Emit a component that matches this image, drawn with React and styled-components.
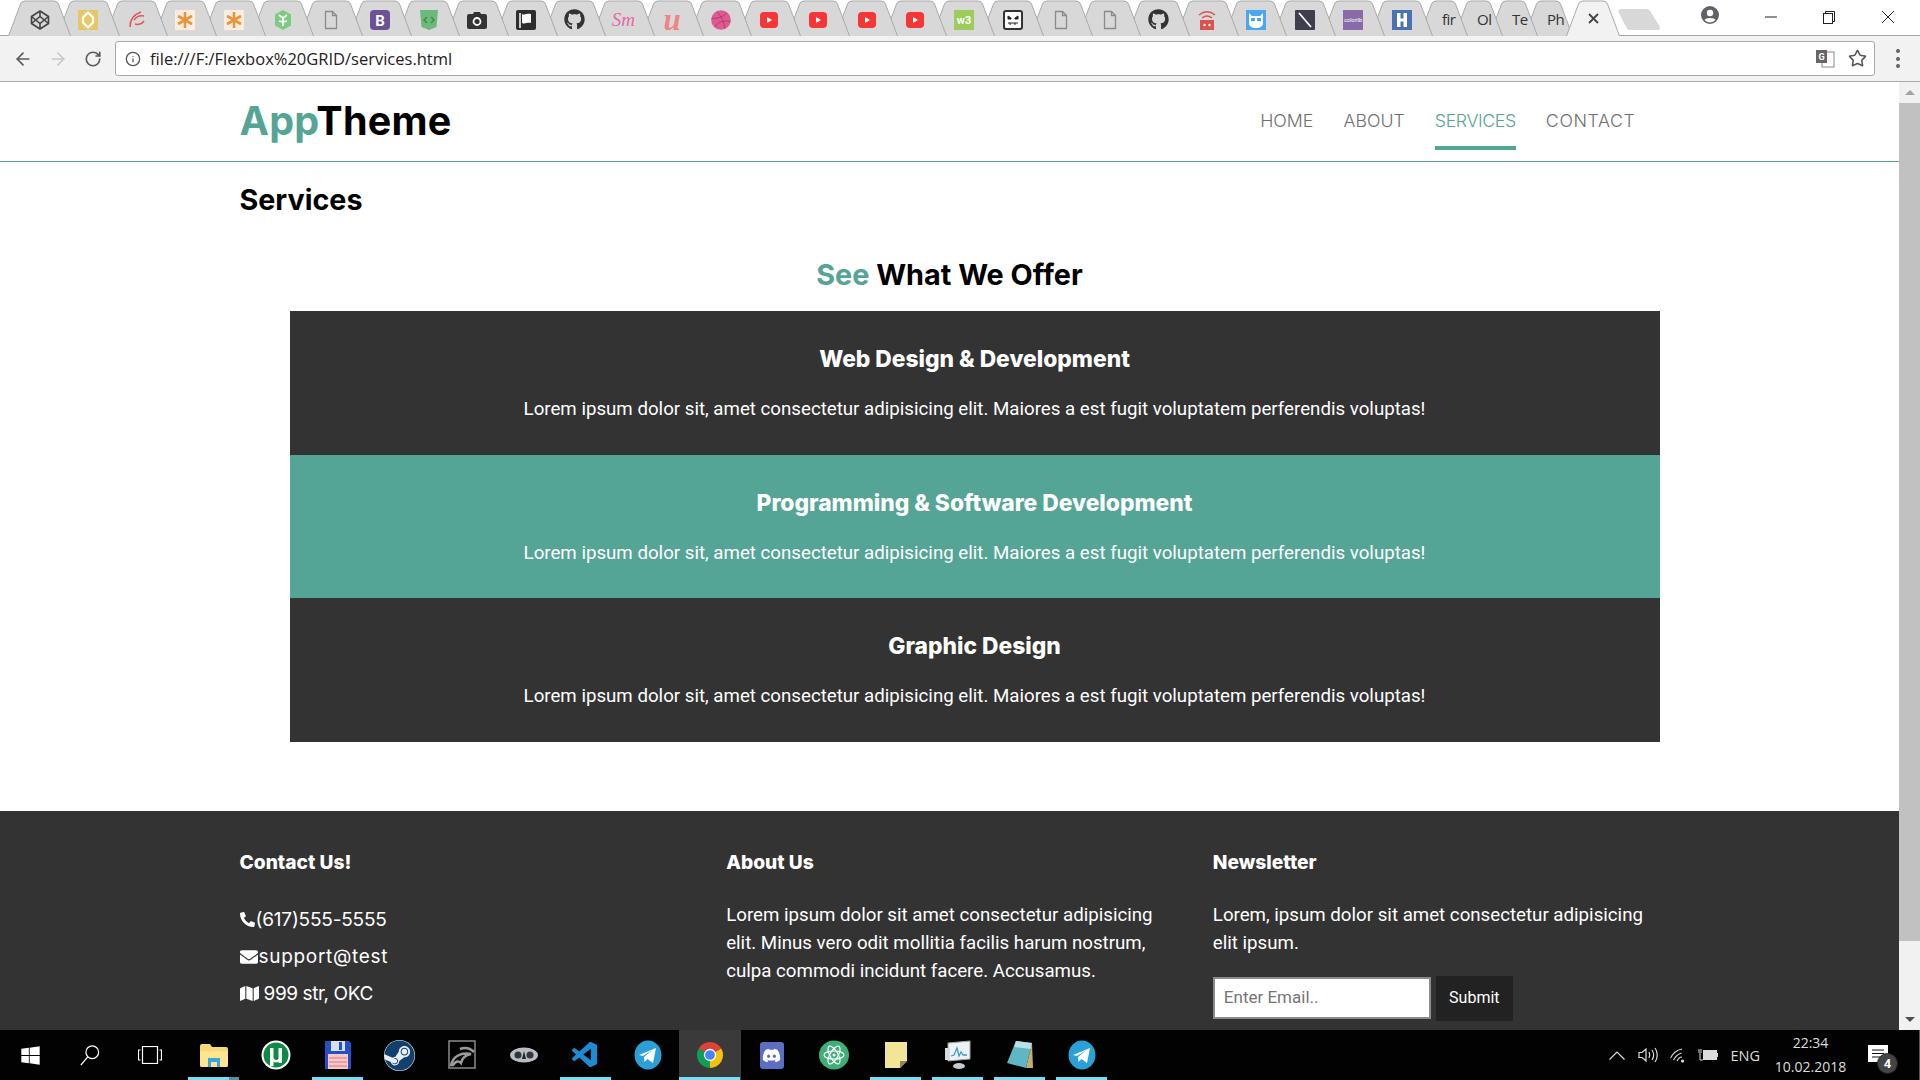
import React from 'react'
import styled, { createGlobalStyle } from 'styled-components'
import { ArrowLeft, ArrowRight, RotateCw, Info, Star } from 'lucide-react'
import { FaGithub, FaPhoneAlt, FaEnvelope, FaMap, FaWindows, FaSteam, FaDiscord } from 'react-icons/fa'
import { VscVscode } from 'react-icons/vsc'

const TEAL = '#55a596'

const Script = styled.span`
  font-family: "Liberation Serif", serif;
  font-style: italic;
  font-weight: ${({ $weight }) => $weight};
  font-size: ${({ $size }) => $size}px;
  line-height: 20px;
  color: ${({ $color }) => $color};
  white-space: nowrap;
`

const SteamWrap = styled.div`
  width: 31px;
  height: 31px;
  border-radius: 50%;
  background: #e8eef3;
`

const DiscordBox = styled.div`
  width: 24px;
  height: 27px;
  display: flex;
  align-items: center;
  justify-content: center;
  background: #5b6ec2;
  border-radius: 3px;
`

const Doc = () => (
  <svg width="20" height="20" viewBox="0 0 20 20" fill="none" stroke="#8a8a8a" strokeWidth="1.3">
    <path d="M4.5 1.5h7l4 4v13h-11z" /><path d="M11.5 1.5v4h4" />
  </svg>
)

const Tube = () => (
  <svg width="20" height="20" viewBox="0 0 20 20">
    <rect x="1" y="2" width="18" height="16" rx="4" fill="#f83535" />
    <path d="M8 7l5 3-5 3z" fill="#fff" />
  </svg>
)

const Star8 = () => (
  <svg width="20" height="20" viewBox="0 0 20 20">
    <rect width="20" height="20" fill="#fbeee0" />
    <g stroke="#e8963c" strokeWidth="2.6">
      <path d="M10 2v16M3 6l14 8M17 6L3 14" />
    </g>
  </svg>
)

const favicons = [
  <svg width="20" height="20" viewBox="0 0 20 20" fill="none" stroke="#444" strokeWidth="1.6"><path d="M10 1l8.5 5.5v7L10 19l-8.5-5.5v-7z" /><path d="M10 1v5.5M10 13.5V19M1.5 6.500L10 13.500l8.500-7M1.500 13.500L10 6.500l8.500 7" /></svg>,
  <svg width="20" height="20" viewBox="0 0 20 20"><rect width="20" height="24" y="-2" rx="1" fill="#e8c765" /><path d="M10 2.500l5 5v5l-5 5-5-5v-5z" fill="none" stroke="#fff" strokeWidth="2.200" /></svg>,
  <svg width="20" height="20" viewBox="0 0 20 20" fill="none" stroke="#dc5a5a" strokeWidth="1.500"><path d="M3 17C3 9 8 4 14 2" /><path d="M7 10c2-3 6-5 10-4" /><path d="M8 14c3 1 7 0 9-3" /></svg>,
  <Star8 />,
  <Star8 />,
  <svg width="20" height="20" viewBox="0 0 20 20"><path d="M10 0l8 4.500v11L10 20l-8-4.500v-11z" fill="#7ccb80" /><path d="M10 16V8M10 8L6 5M10 8l4-3M10 12l4-1M10 12l-4-1" stroke="#fff" strokeWidth="1.700" /></svg>,
  <Doc />,
  <svg width="20" height="20" viewBox="0 0 20 20"><rect width="20" height="20" rx="4" fill="#6a5295" /><text x="10" y="15.500" textAnchor="middle" fontFamily="Roboto, sans-serif" fontWeight="700" fontSize="15" fill="#fff">B</text></svg>,
  <svg width="20" height="20" viewBox="0 0 20 20"><path d="M1 0h18l-1.500 17L10 20l-7.500-3z" fill="#6cb97c" /><path d="M8 7l-3 3 3 3M12 7l3 3-3 3" fill="none" stroke="#3e8750" strokeWidth="1.400" /></svg>,
  <svg width="20" height="20" viewBox="0 0 20 20"><path d="M2 4h4l1-2h6l1 2h4a2 2 0 0 1 2 2v11a2 2 0 0 1-2 2H2a2 2 0 0 1-2-2V6a2 2 0 0 1 2-2z" fill="#333" /><circle cx="10" cy="11.500" r="3.500" fill="none" stroke="#fff" strokeWidth="1.800" /></svg>,
  <svg width="20" height="20" viewBox="0 0 20 20"><rect width="20" height="20" rx="2" fill="#2d2d2d" /><path d="M4 3v15" stroke="#fff" strokeWidth="1.500" /><path d="M6 4c3 1.500 5-1 9 0v9c-4-1-6 1.500-9 0z" fill="#fff" /></svg>,
  <FaGithub size={21} color="#333" />,
  <Script $size={19} $weight={400} $color="#e868a8">Sm</Script>,
  <Script $size={31} $weight={700} $color="#f08484">u</Script>,
  <svg width="20" height="20" viewBox="0 0 20 20"><circle cx="10" cy="10" r="9.800" fill="#e05a92" /><g fill="none" stroke="#b83a72" strokeWidth="1"><path d="M6 1.500c4 4 7 11 8 17" /><path d="M.5 8.500c6 0 12-1.500 15.500-5.500" /><path d="M4 17c2-5 8-7 15.500-5.500" /></g></svg>,
  <Tube />,
  <Tube />,
  <Tube />,
  <Tube />,
  <svg width="20" height="20" viewBox="0 0 20 20"><rect width="20" height="20" rx="1" fill="#9ccc5c" /><text x="10" y="14" textAnchor="middle" fontFamily="Roboto, sans-serif" fontWeight="700" fontSize="11" fill="#fff">w3</text></svg>,
  <svg width="20" height="20" viewBox="0 0 20 20"><rect x="1" y="1" width="18" height="18" rx="2" fill="#fff" stroke="#333" strokeWidth="2" /><path d="M5 6l3 2v1H5zM15 6l-3 2v1h3zM5 13h10M7 13v2M12 13v2" fill="#222" stroke="#222" /></svg>,
  <Doc />,
  <Doc />,
  <FaGithub size={21} color="#333" />,
  <svg width="20" height="20" viewBox="0 0 20 20"><path d="M2 5c5-4 11-4 16 0M5 8c3-2.500 7-2.500 10 0" fill="none" stroke="#d9534f" strokeWidth="1.400" /><rect x="3" y="10" width="14" height="10" fill="#d9534f" /><circle cx="7.500" cy="15" r="1.200" fill="#fff" /><circle cx="12.500" cy="15" r="1.200" fill="#fff" /></svg>,
  <svg width="20" height="20" viewBox="0 0 20 20"><rect width="20" height="20" fill="#4aa8f0" /><path d="M3 3l3 3h8l3-3v10a5 5 0 0 1-5 5H8a5 5 0 0 1-5-5z" fill="#fff" /><path d="M5 8h4v3H5zM11 8h4v3h-4z" fill="#4aa8f0" /></svg>,
  <svg width="20" height="20" viewBox="0 0 20 20"><rect width="20" height="20" rx="1" fill="#3f3e50" /><path d="M4 3l12 14" stroke="#fff" strokeWidth="1.800" /></svg>,
  <svg width="20" height="20" viewBox="0 0 20 20"><rect width="20" height="20" fill="#8a6ba8" /><text x="10" y="12" textAnchor="middle" fontFamily="Roboto, sans-serif" fontSize="5.500" fill="#fff">colorlib</text></svg>,
  <svg width="20" height="20" viewBox="0 0 20 20"><rect width="20" height="20" fill="#4a73b4" /><path d="M5 3h3.500v5.500h3V3H15v14h-3.500v-5.500h-3V17H5z" fill="#fff" /></svg>,
]

const textTabs = ['fir', 'Ol', 'Te', 'Ph']

const Telegram = () => (
  <svg width="28" height="30" viewBox="0 0 28 30">
    <ellipse cx="14" cy="15" rx="13.500" ry="14.500" fill="#2b9fd8" />
    <path d="M5 15L22 8l-3 15-5.500-4-3 3-.5-5 8.500-7-9.500 6z" fill="#fff" />
  </svg>
)

const taskItems = [
  { icon: <svg width="28" height="24" viewBox="0 0 28 24"><path d="M0 3a2 2 0 0 1 2-2h8l2 3h14a2 2 0 0 1 2 2v16a2 2 0 0 1-2 2H2a2 2 0 0 1-2-2z" fill="#f6d876" /><path d="M0 8h28v14a2 2 0 0 1-2 2H2a2 2 0 0 1-2-2z" fill="#fde48f" /><path d="M8 24V15h12v9h-3v-5h-6v5z" fill="#3aa4e0" /></svg>, state: 'split' },
  { icon: <svg width="30" height="30" viewBox="0 0 30 30"><circle cx="15" cy="15" r="14.500" fill="#fff" /><circle cx="15" cy="15" r="12.500" fill="#0f8a45" /><path d="M9 8h3.500v10a3 3 0 0 0 5 1V8H21v15h-3.500v-1.500c-1.500 1.200-3.500 1.200-5 .5V26H9z" fill="#fff" /></svg> },
  { icon: <svg width="28" height="30" viewBox="0 0 28 30"><path d="M1 1h24l2 2v26H1z" fill="#2150c8" /><rect x="7" y="1" width="14" height="10" fill="#d9dfe8" /><rect x="15" y="2" width="3" height="8" fill="#2150c8" /><rect x="4" y="14" width="20" height="15" fill="#f9c7c7" /><path d="M5 18h18M5 22h18M5 26h18" stroke="#d67a7a" /></svg>, state: 'open' },
  { icon: <SteamWrap><FaSteam size={31} color="#12406e" /></SteamWrap> },
  { icon: <svg width="28" height="30" viewBox="0 0 28 30" fill="none"><rect x="1" y="1" width="26" height="27" stroke="#8b8b8b" strokeWidth="1.500" /><path d="M3 25c2-8 9-13 20-11-5 1-9 4-10 9-3-3-6-1-8 2zM12 9c5-2 10-1 14 3" stroke="#9a9a9a" strokeWidth="2.500" /></svg> },
  { icon: <svg width="28" height="16" viewBox="0 0 28 16"><ellipse cx="14" cy="8" rx="14" ry="7.500" fill="#b9bec4" /><circle cx="8" cy="8" r="3.500" fill="#34383c" /><circle cx="20" cy="8" r="3.500" fill="#34383c" /><path d="M14 4l2 8h-4z" fill="#22262a" /></svg> },
  { icon: <VscVscode size={31} color="#1f8ad2" />, state: 'open' },
  { icon: <Telegram /> },
  { icon: <svg width="28" height="30" viewBox="0 0 30 30"><path d="M15 15L2.900 8A14 14 0 0 1 27.100 8z" fill="#db4437" /><path d="M15 15L27.100 8A14 14 0 0 1 15 29z" fill="#f4c20d" /><path d="M15 15V29A14 14 0 0 1 2.900 8z" fill="#0f9d58" /><circle cx="15" cy="15" r="6.600" fill="#fff" /><circle cx="15" cy="15" r="5.200" fill="#4285f4" /></svg>, state: 'active' },
  { icon: <DiscordBox><FaDiscord size={19} color="#fff" /></DiscordBox> },
  { icon: <svg width="30" height="30" viewBox="0 0 30 30"><ellipse cx="15" cy="15" rx="15" ry="14.500" fill="#3fae78" /><g fill="none" stroke="#fff" strokeWidth="1.200"><ellipse cx="15" cy="15" rx="10" ry="4" /><ellipse cx="15" cy="15" rx="10" ry="4" transform="rotate(60 15 15)" /><ellipse cx="15" cy="15" rx="10" ry="4" transform="rotate(120 15 15)" /></g><circle cx="15" cy="15" r="1.500" fill="#fff" /></svg> },
  { icon: <svg width="24" height="28" viewBox="0 0 24 28"><path d="M1 1h22v19l-7 7H1z" fill="#f3e598" /><path d="M23 20l-7 7v-7z" fill="#8b8560" /></svg>, state: 'open' },
  { icon: <svg width="28" height="30" viewBox="0 0 28 30"><path d="M4 3l22-2v18L4 21z" fill="#eef2f5" stroke="#9aa4ac" /><path d="M7 16l3-1 3-7 2 8 2-4 2 3 4 0" fill="none" stroke="#3d9ad1" strokeWidth="1.300" /><ellipse cx="15" cy="26" rx="6" ry="3" fill="#c5c9cd" /><rect x="1" y="8" width="5" height="12" fill="#d6dade" /></svg>, state: 'open' },
  { icon: <svg width="28" height="30" viewBox="0 0 28 30"><path d="M10 1l16 2-6 25L1 23z" fill="#5fb7c6" /><path d="M10 1l16 2-1 6-17-2z" fill="#b9e0e6" /><path d="M26 3l1 25h-7z" fill="#c9ad6c" /></svg>, state: 'open' },
  { icon: <Telegram />, state: 'open' },
]

const services = [
  { title: 'Web Design & Development' },
  { title: 'Programming & Software Development', accent: true },
  { title: 'Graphic Design' },
]

const LOREM = 'Lorem ipsum dolor sit, amet consectetur adipisicing elit. Maiores a est fugit voluptatem perferendis voluptas!'

export default function App() {
  return (
    <Screen>
      <GlobalStyle />
      <Browser>
        <TabStrip>
          {favicons.map((icon, i) => (
            <Tab key={i} style={{ zIndex: 60 - i }}>
              <TabShape width="63" height="36" viewBox="0 0 63 36">
                <path d="M0.5 36L12.500 4Q13.700 1 17 1H46Q49.300 1 50.500 4L62.500 36" fill="#d8d8d8" stroke="#a9a9a9" />
              </TabShape>
              <TabIcon>{icon}</TabIcon>
            </Tab>
          ))}
          {textTabs.map((label, i) => (
            <TextTab key={label} style={{ zIndex: 30 - i }}>
              <TabShape width="49" height="36" viewBox="0 0 49 36">
                <path d="M0.500 36L12.500 4Q13.700 1 17 1H32Q35.300 1 36.500 4L48.500 36" fill="#d8d8d8" stroke="#a9a9a9" />
              </TabShape>
              <TextTabLabel>{label}</TextTabLabel>
            </TextTab>
          ))}
          <ActiveTab>
            <TabShape width="54" height="36" viewBox="0 0 54 36">
              <path d="M0.500 36L12.500 4Q13.700 1 17 1H37Q40.300 1 41.500 4L53.500 36" fill="#f2f2f2" stroke="#a9a9a9" />
            </TabShape>
            <TabClose>
              <svg width="11" height="11" viewBox="0 0 11 11" stroke="#444" strokeWidth="1.800"><path d="M1 1l9 9M10 1l-9 9" /></svg>
            </TabClose>
          </ActiveTab>
          <NewTab width="42" height="21" viewBox="0 0 42 21">
            <path d="M3 0H29Q31 0 32 2L41.500 17Q43 21 39 21H12Q9.500 21 8.500 19L.5 3Q0 0 3 0z" fill="#d8d8d8" />
          </NewTab>
          <WindowControls>
            <Avatar>
              <svg width="18" height="18" viewBox="0 0 18 18"><circle cx="9" cy="9" r="9" fill="#5f6368" /><circle cx="9" cy="7" r="3.200" fill="#fff" /><path d="M3.500 14c1-2.800 10-2.800 11 0a7.500 7.500 0 0 1-11 0z" fill="#fff" /></svg>
            </Avatar>
            <WindowBtn>
              <svg width="12" height="2" viewBox="0 0 12 2"><path d="M0 1h12" stroke="#222" /></svg>
            </WindowBtn>
            <WindowBtn>
              <svg width="12" height="13" viewBox="0 0 12 13" fill="none" stroke="#222"><rect x=".5" y="2.500" width="9" height="10" /><path d="M2.500 2.500V.5h9v10H9.500" /></svg>
            </WindowBtn>
            <WindowBtn>
              <svg width="12" height="12" viewBox="0 0 12 12" stroke="#222"><path d="M0 0l12 12M12 0L0 12" /></svg>
            </WindowBtn>
          </WindowControls>
        </TabStrip>
        <Toolbar>
          <ToolBtn><ArrowLeft size={20} color="#5a5a5a" strokeWidth={2} /></ToolBtn>
          <ToolBtn><ArrowRight size={20} color="#c9c9c9" strokeWidth={2} /></ToolBtn>
          <ToolBtn><RotateCw size={18} color="#5a5a5a" strokeWidth={2.200} /></ToolBtn>
          <Address>
            <Info size={16} color="#555" strokeWidth={2} />
            <Url>file:///F:/Flexbox%20GRID/services.html</Url>
            <AddressEnd>
              <svg width="19" height="19" viewBox="0 0 19 19"><rect x="6" y="3" width="12" height="15" fill="#fff" stroke="#888" /><rect x="0" y="1" width="11" height="13" fill="#666" /><text x="5.500" y="11" textAnchor="middle" fontFamily="Roboto, sans-serif" fontWeight="700" fontSize="9" fill="#fff">G</text></svg>
              <Star size={19} color="#555" strokeWidth={2} />
            </AddressEnd>
          </Address>
          <MenuBtn>
            <MenuDot /><MenuDot /><MenuDot />
          </MenuBtn>
        </Toolbar>
      </Browser>

      <Viewport>
        <Page>
          <Header>
            <HeaderInner>
              <Logo><Accent>App</Accent>Theme</Logo>
              <Nav>
                <NavLink>HOME</NavLink>
                <NavLink>ABOUT</NavLink>
                <NavLink $active $track={-0.4}>SERVICES</NavLink>
                <NavLink $track={0.6}>CONTACT</NavLink>
              </Nav>
            </HeaderInner>
          </Header>

          <Container>
            <PageTitle>Services</PageTitle>
            <SectionTitle><Accent>See</Accent> What We Offer</SectionTitle>
            <ServiceList>
              {services.map(({ title, accent }) => (
                <ServiceRow key={title} $accent={accent}>
                  <ServiceTitle>{title}</ServiceTitle>
                  <ServiceText>{LOREM}</ServiceText>
                </ServiceRow>
              ))}
            </ServiceList>
          </Container>

          <Footer>
            <FooterGrid>
              <div>
                <FooterTitle>Contact Us!</FooterTitle>
                <ContactList>
                  <ContactRow $track={-0.2}><FaPhoneAlt size={15} />(617)555-5555</ContactRow>
                  <ContactRow $track={0.7}><FaEnvelope size={18} />support@test</ContactRow>
                  <ContactRow $spaced $track={-0.4}><FaMap size={19} />999 str, OKC</ContactRow>
                </ContactList>
              </div>
              <div>
                <FooterTitle>About Us</FooterTitle>
                <FooterText>Lorem ipsum dolor sit amet consectetur adipisicing elit. Minus vero odit mollitia facilis harum nostrum, culpa commodi incidunt facere. Accusamus.</FooterText>
              </div>
              <div>
                <FooterTitle>Newsletter</FooterTitle>
                <FooterText>Lorem, ipsum dolor sit amet consectetur adipisicing elit ipsum.</FooterText>
                <Subscribe>
                  <EmailInput placeholder="Enter Email.." />
                  <SubmitBtn>Submit</SubmitBtn>
                </Subscribe>
              </div>
            </FooterGrid>
          </Footer>
        </Page>

        <Scrollbar>
          <ScrollArrow><ArrowUp /></ScrollArrow>
          <ScrollTrack><ScrollThumb /></ScrollTrack>
          <ScrollArrow><ArrowDown /></ScrollArrow>
        </Scrollbar>
      </Viewport>

      <Taskbar>
        <StartGroup>
          <StartCell>
            <FaWindows size={21} color="#fff" />
          </StartCell>
          <StartCell>
            <svg width="20" height="24" viewBox="0 0 22 24" fill="none" stroke="#fff" strokeWidth="1.300"><circle cx="13.500" cy="9" r="7" /><path d="M8.500 14L1 23" /></svg>
          </StartCell>
          <StartCell>
            <svg width="24" height="18" viewBox="0 0 24 18" fill="none" stroke="#fff" strokeWidth="1.200"><rect x="4.500" y=".5" width="15" height="17" /><path d="M2.500 4H.5v10h2M21.500 4h2v10h-2" /></svg>
          </StartCell>
        </StartGroup>
        {taskItems.map(({ icon, state }, i) => (
          <TaskCell key={i} $state={state}>{icon}</TaskCell>
        ))}
        <Tray>
          <svg width="16" height="9" viewBox="0 0 16 9" fill="none" stroke="#ddd" strokeWidth="1.200"><path d="M.5 8.500L8 1l7.500 7.500" /></svg>
          <svg width="20" height="16" viewBox="0 0 20 16" fill="none" stroke="#ddd" strokeWidth="1.200"><path d="M1 5.500h3L8 2v12l-4-3.500H1zM11 5c1 2 1 4 0 6M14 3c2 3 2 7 0 10M17 1c3 4 3 10 0 14" /></svg>
          <svg width="15" height="15" viewBox="0 0 15 15" fill="none" stroke="#ddd" strokeWidth="1.200"><path d="M.5 10C3 5 7 2 12 1M3.500 12c2-4 5-6 8-7M7 13c1-2 3-4 5-4" /><circle cx="12.500" cy="13" r="1" fill="#ddd" /></svg>
          <svg width="20" height="12" viewBox="0 0 20 12"><path d="M0 1h4M0 3h4M2 4v7h3" stroke="#ddd" fill="none" /><rect x="5.500" y="1.500" width="13" height="9" fill="#ddd" stroke="#ddd" /><rect x="19" y="4" width="1" height="4" fill="#ddd" /></svg>
          <Lang>ENG</Lang>
          <Clock>
            <span>22:34</span>
            <span>10.02.2018</span>
          </Clock>
          <Notify>
            <svg width="20" height="18" viewBox="0 0 20 18"><rect width="20" height="17" fill="#fff" /><path d="M4 5h12M4 8.500h12M4 12h8" stroke="#111" /></svg>
            <NotifyBadge>4</NotifyBadge>
          </Notify>
        </Tray>
      </Taskbar>
    </Screen>
  )
}

const GlobalStyle = createGlobalStyle`
  * { box-sizing: border-box; }
  html, body { margin: 0; padding: 0; }
  body {
    font-family: Roboto, "Liberation Sans", sans-serif;
    overflow: hidden;
    background: #fff;
  }
`

const Screen = styled.div`
  width: 1920px;
  height: 1080px;
  display: flex;
  flex-direction: column;
  overflow: hidden;
`

const Browser = styled.div`
  flex: none;
  height: 82px;
  display: flex;
  flex-direction: column;
`

const TabStrip = styled.div`
  height: 36px;
  flex: none;
  display: flex;
  align-items: flex-start;
  padding-left: 8px;
  background: #fff;
  border-bottom: 1px solid #a9a9a9;
`

const Tab = styled.div`
  position: relative;
  flex: none;
  width: 63px;
  height: 36px;
  margin-right: -14.35px;
  display: flex;
  align-items: center;
  justify-content: center;
  padding-top: 3px;
`

const TabShape = styled.svg`
  position: absolute;
  left: 0;
  top: 0;
`

const TabIcon = styled.div`
  position: relative;
  width: 21px;
  height: 21px;
  display: flex;
  align-items: center;
  justify-content: center;
  svg { display: block; }
`

const TextTab = styled.div`
  position: relative;
  flex: none;
  width: 49px;
  height: 36px;
  margin-right: -14px;
`

const TextTabLabel = styled.span`
  position: absolute;
  left: 23px;
  top: 8px;
  font-family: "Open Sans", sans-serif;
  font-size: 15px;
  line-height: 22px;
  letter-spacing: -0.5px;
  color: #333;
  white-space: nowrap;
`

const ActiveTab = styled.div`
  position: relative;
  z-index: 70;
  flex: none;
  width: 54px;
  height: 36px;
  margin-left: 7px;
`

const TabClose = styled.div`
  position: absolute;
  left: 22px;
  top: 13px;
  line-height: 0;
`

const NewTab = styled.svg`
  flex: none;
  margin: 9px 0 0 -2px;
`

const WindowControls = styled.div`
  margin-left: auto;
  padding-right: 3px;
  display: flex;
  height: 35px;
`

const Avatar = styled.div`
  width: 64px;
  height: 30px;
  display: flex;
  align-items: center;
  justify-content: center;
`

const WindowBtn = styled.div`
  width: 58.500px;
  height: 34px;
  display: flex;
  align-items: center;
  justify-content: center;
`

const Toolbar = styled.div`
  height: 46px;
  flex: none;
  display: flex;
  align-items: flex-start;
  padding: 5px 0 0 5px;
  background: #f2f2f2;
  border-bottom: 1px solid #a9a9a9;
`

const ToolBtn = styled.div`
  width: 35px;
  height: 35px;
  flex: none;
  display: flex;
  align-items: center;
  justify-content: center;
`

const Address = styled.div`
  width: 1760px;
  height: 35px;
  margin-left: 5px;
  padding: 0 7px 0 9px;
  display: flex;
  align-items: center;
  gap: 9px;
  background: #fff;
  border: 1px solid #a9a9a9;
  border-radius: 3px;
`

const Url = styled.span`
  font-family: "Open Sans", sans-serif;
  font-size: 16.500px;
  color: #222;
`

const AddressEnd = styled.div`
  margin-left: auto;
  display: flex;
  align-items: center;
  gap: 13px;
`

const MenuBtn = styled.div`
  width: 45px;
  height: 35px;
  display: flex;
  flex-direction: column;
  align-items: center;
  justify-content: center;
  gap: 3.500px;
`

const MenuDot = styled.span`
  width: 4px;
  height: 4px;
  border-radius: 50%;
  background: #5f6368;
`

const Viewport = styled.div`
  flex: 1;
  min-height: 0;
  display: flex;
`

const Page = styled.div`
  width: 1899px;
  flex: none;
  overflow: hidden;
  background: #fff;
`

const Header = styled.header`
  height: 80px;
  border-bottom: 1px solid #5f9e90;
`

const HeaderInner = styled.div`
  width: 1420px;
  height: 100%;
  margin: 0 auto;
  display: flex;
  justify-content: space-between;
  align-items: flex-start;
`

const Logo = styled.div`
  margin-top: 12px;
  font-family: Inter, sans-serif;
  font-weight: 700;
  font-size: 39.500px;
  line-height: 54px;
  letter-spacing: 0.2px;
  color: #000;
`

const Accent = styled.span`
  color: ${TEAL};
`

const Nav = styled.nav`
  display: flex;
  gap: 30px;
  margin: 25px 24px 0 0;
`

const NavLink = styled.a`
  display: block;
  padding-bottom: 11px;
  font-family: Inter, sans-serif;
  font-weight: 300;
  font-size: 17.800px;
  line-height: 28px;
  letter-spacing: ${({ $track }) => $track || 0}px;
  color: ${({ $active }) => ($active ? TEAL : '#6f6f6f')};
  border-bottom: 4px solid ${({ $active }) => ($active ? TEAL : 'transparent')};
`

const Container = styled.main`
  width: 1420px;
  margin: 0 auto;
  padding-top: 17px;
`

const PageTitle = styled.h1`
  margin: 0;
  font-family: Inter, sans-serif;
  font-weight: 700;
  font-size: 28.700px;
  line-height: 42px;
  color: #000;
`

const SectionTitle = styled.h2`
  margin: 33px 0 15px;
  font-family: Inter, sans-serif;
  font-weight: 700;
  font-size: 28.800px;
  line-height: 42px;
  text-align: center;
  color: #000;
`

const ServiceList = styled.div`
  margin-left: 50px;
  width: 1370px;
`

const ServiceRow = styled.section`
  height: 143.670px;
  padding-top: 31px;
  text-align: center;
  color: #fff;
  background: ${({ $accent }) => ($accent ? TEAL : '#333')};
`

const ServiceTitle = styled.h3`
  margin: 0 0 19px;
  font-family: Inter, sans-serif;
  font-weight: 800;
  font-size: 22.800px;
  line-height: 34px;
`

const ServiceText = styled.p`
  margin: 0;
  font-size: 18.700px;
  line-height: 28px;
`

const Footer = styled.footer`
  margin-top: 69px;
  padding: 37px 0 40px;
  background: #333;
  color: #fff;
`

const FooterGrid = styled.div`
  width: 1420px;
  margin: 0 auto;
  display: grid;
  grid-template-columns: repeat(3, 1fr);
  gap: 40px;
`

const FooterTitle = styled.h4`
  margin: 0;
  font-family: Inter, sans-serif;
  font-weight: 800;
  font-size: 19.200px;
  line-height: 28px;
`

const ContactList = styled.div`
  margin-top: 25px;
`

const ContactRow = styled.div`
  display: flex;
  align-items: center;
  gap: ${({ $spaced }) => ($spaced ? '5px' : '1px')};
  font-family: Inter, sans-serif;
  font-size: 19px;
  line-height: 37.200px;
  letter-spacing: ${({ $track }) => $track || 0}px;
`

const FooterText = styled.p`
  margin: 25px 0 0;
  font-size: 18.700px;
  line-height: 28px;
`

const Subscribe = styled.form`
  margin-top: 19px;
  display: flex;
  align-items: center;
  gap: 5px;
`

const EmailInput = styled.input`
  width: 218px;
  height: 42px;
  padding: 0 9px 2px;
  font-family: Roboto, sans-serif;
  font-size: 17px;
  background: #fff;
  border: 2px solid #8a8a8a;
  &::placeholder { color: #757575; opacity: 1; }
`

const SubmitBtn = styled.button`
  width: 77px;
  height: 45px;
  padding: 0 0 2px;
  font-family: Roboto, sans-serif;
  font-size: 16px;
  color: #fff;
  background: #222;
  border: 0;
`

const Scrollbar = styled.div`
  width: 21px;
  flex: none;
  display: flex;
  flex-direction: column;
  background: #f1f1f1;
`

const ScrollArrow = styled.div`
  height: 21px;
  flex: none;
  display: flex;
  align-items: center;
  justify-content: center;
`

const ArrowUp = styled.span`
  border-left: 5px solid transparent;
  border-right: 5px solid transparent;
  border-bottom: 5px solid #a3a3a3;
`

const ArrowDown = styled.span`
  border-left: 5px solid transparent;
  border-right: 5px solid transparent;
  border-top: 5px solid #505050;
`

const ScrollTrack = styled.div`
  flex: 1;
`

const ScrollThumb = styled.div`
  height: 838px;
  background: #c1c1c1;
`

const Taskbar = styled.div`
  height: 50px;
  flex: none;
  display: flex;
  background: #020202;
  border-right: 1px solid #555;
`

const StartGroup = styled.div`
  flex: none;
  width: 182.800px;
  display: flex;
`

const StartCell = styled.div`
  width: 60px;
  height: 50px;
  display: flex;
  align-items: center;
  justify-content: center;
  svg { display: block; }
`

const TaskCell = styled.div`
  position: relative;
  flex: none;
  width: 62px;
  height: 50px;
  display: flex;
  align-items: center;
  justify-content: center;
  background: ${({ $state }) => ($state === 'active' ? '#3a3a3a' : 'transparent')};
  svg { display: block; }

  &::after {
    content: '';
    display: ${({ $state }) => ($state ? 'block' : 'none')};
    position: absolute;
    bottom: 0;
    height: 3px;
    left: ${({ $state }) => ($state === 'active' ? '0' : '5.500px')};
    right: ${({ $state }) => ($state === 'active' ? '1px' : '5.500px')};
    background: ${({ $state }) =>
      $state === 'split' ? 'linear-gradient(to right, #76e0f8 80%, #4a96a8 80%)' : '#76e0f8'};
  }
`

const Tray = styled.div`
  margin-left: auto;
  padding-right: 31px;
  display: flex;
  align-items: center;
  gap: 12.500px;
  color: #ddd;
`

const Lang = styled.span`
  font-family: "Open Sans", sans-serif;
  font-size: 14.500px;
`

const Clock = styled.div`
  width: 80px;
  margin: 0 5px 0 -2px;
  display: flex;
  flex-direction: column;
  align-items: center;
  gap: 6px;
  font-family: "Open Sans", sans-serif;
  font-size: 14px;
  line-height: 18px;
`

const Notify = styled.div`
  position: relative;
  line-height: 0;
  margin-top: -2px;
`

const NotifyBadge = styled.span`
  position: absolute;
  left: 9px;
  top: 8px;
  width: 21px;
  height: 21px;
  border-radius: 50%;
  background: #444;
  border: 1px solid #222;
  color: #fff;
  font-family: Roboto, sans-serif;
  font-weight: 700;
  font-size: 13px;
  line-height: 19px;
  text-align: center;
`
